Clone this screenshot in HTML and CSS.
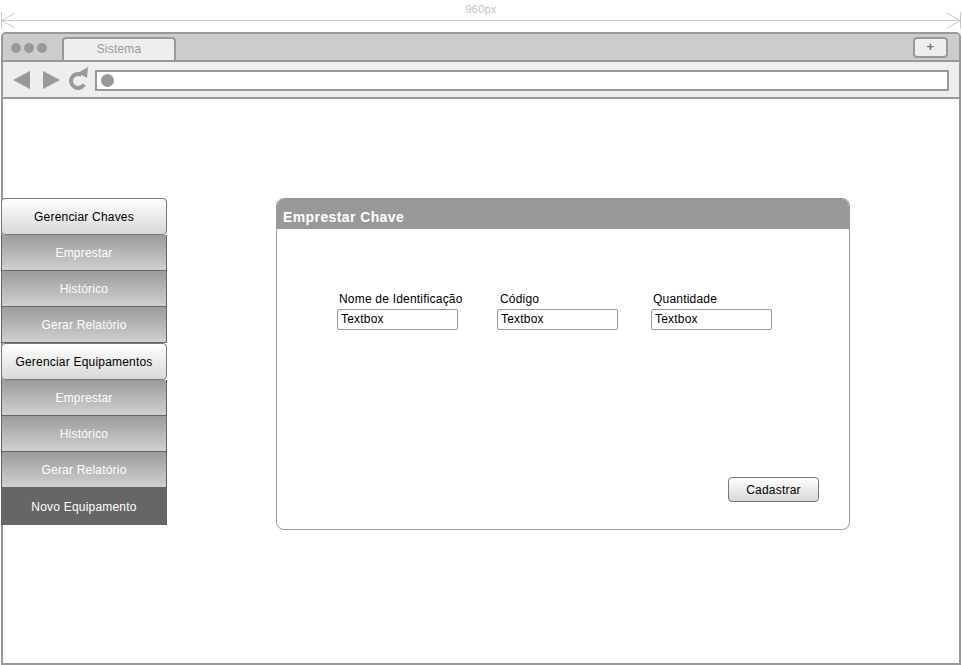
FILE: index.html
```html
<!DOCTYPE html>
<html lang="pt">
<head>
<meta charset="utf-8">
<title>Sistema</title>
<link rel="stylesheet" href="styles.css">
</head>
<body>
<div class="ruler">
  <svg class="ruler-line" width="962" height="32" viewBox="0 0 962 32">
    <line x1="1" y1="20.5" x2="961" y2="20.5" stroke="#c8c8c8" stroke-width="1"/>
    <line x1="1.5" y1="12" x2="1.5" y2="29" stroke="#c8c8c8" stroke-width="1"/>
    <line x1="1.5" y1="20.5" x2="15" y2="13" stroke="#c8c8c8" stroke-width="1"/>
    <line x1="1.5" y1="20.5" x2="15" y2="28" stroke="#c8c8c8" stroke-width="1"/>
    <line x1="960.5" y1="12" x2="960.5" y2="29" stroke="#c8c8c8" stroke-width="1"/>
    <line x1="960.5" y1="20.5" x2="947" y2="13" stroke="#c8c8c8" stroke-width="1"/>
    <line x1="960.5" y1="20.5" x2="947" y2="28" stroke="#c8c8c8" stroke-width="1"/>
  </svg>
  <span class="ruler-label">960px</span>
</div>
<div class="browser">
  <div class="titlebar">
    <div class="dots"><span></span><span></span><span></span></div>
    <div class="tab">Sistema</div>
    <div class="newtab">+</div>
  </div>
  <div class="toolbar">
    <svg class="nav-icons" width="90" height="35" viewBox="0 0 90 35">
      <polygon points="27,9 27,27 10,18" fill="#999"/>
      <polygon points="40,9 40,27 57,18" fill="#999"/>
      <path d="M81.1 22.5 A7 7 0 1 1 78.5 12.9" fill="none" stroke="#999" stroke-width="4"/>
      <polygon points="75,11 85,5 84,16" fill="#999"/>
    </svg>
    <div class="address"><span class="address-dot"></span></div>
  </div>
  <div class="content">
    <nav class="sidebar">
      <div class="menu-head">Gerenciar Chaves</div>
      <div class="menu-item">Emprestar</div>
      <div class="menu-item">Histórico</div>
      <div class="menu-item">Gerar Relatório</div>
      <div class="menu-head">Gerenciar Equipamentos</div>
      <div class="menu-item">Emprestar</div>
      <div class="menu-item">Histórico</div>
      <div class="menu-item">Gerar Relatório</div>
      <div class="menu-active">Novo Equipamento</div>
    </nav>
    <section class="panel">
      <div class="panel-header">Emprestar Chave</div>
      <div class="panel-body">
        <div class="fields">
          <div class="field">
            <label class="field-label">Nome de Identificação</label>
            <div class="textbox">Textbox</div>
          </div>
          <div class="field">
            <label class="field-label">Código</label>
            <div class="textbox">Textbox</div>
          </div>
          <div class="field">
            <label class="field-label">Quantidade</label>
            <div class="textbox">Textbox</div>
          </div>
        </div>
        <button class="btn" type="button">Cadastrar</button>
      </div>
    </section>
  </div>
</div>
</body>
</html>
```
FILE: styles.css
```css
* { box-sizing: border-box; }
html, body {
  margin: 0;
  padding: 0;
  background: #fff;
}
body {
  width: 962px;
  height: 665px;
  overflow: hidden;
  font-family: "Liberation Sans", Arial, sans-serif;
  font-size: 12px;
  letter-spacing: 0.2px;
  color: #000;
}

/* ruler */
.ruler {
  display: grid;
  height: 32px;
}
.ruler-line, .ruler-label { grid-area: 1 / 1; }
.ruler-line { display: block; }
.ruler-label {
  justify-self: center;
  margin-top: 3px;
  font-size: 11px;
  line-height: 13px;
  color: #c4c4c4;
}

/* browser frame */
.browser {
  margin-left: 1px;
  width: 960px;
  height: 633px;
  border: 2px solid #999;
  border-radius: 5px 5px 0 0;
  display: flex;
  flex-direction: column;
}
.titlebar {
  height: 28px;
  background: #ccc;
  border-bottom: 2px solid #999;
  display: flex;
  align-items: flex-start;
  padding-left: 8px;
  padding-right: 11px;
  border-radius: 3px 3px 0 0;
}
.dots {
  display: flex;
  gap: 3px;
  margin-top: 9px;
}
.dots span {
  width: 10px;
  height: 10px;
  border-radius: 50%;
  background: #999;
}
.tab {
  margin-left: 15px;
  margin-top: 3px;
  width: 114px;
  height: 23px;
  background: #eee;
  border: 2px solid #999;
  border-bottom: none;
  border-radius: 4px 4px 0 0;
  color: #999;
  font-size: 12px;
  line-height: 20px;
  text-align: center;
}
.newtab {
  margin-left: auto;
  margin-top: 3px;
  width: 35px;
  height: 21px;
  background: #eee;
  border: 2px solid #999;
  border-radius: 4px;
  color: #777;
  font-weight: bold;
  font-size: 13px;
  line-height: 16px;
  text-align: center;
}
.toolbar {
  height: 37px;
  background: #eee;
  border-bottom: 2px solid #999;
  display: flex;
  align-items: flex-start;
}
.nav-icons { display: block; flex: none; }
.address {
  margin-left: 2px;
  margin-top: 8px;
  width: 854px;
  height: 21px;
  background: #fff;
  border: 2px solid #999;
  display: flex;
  align-items: center;
  padding-left: 4px;
}
.address-dot {
  width: 13px;
  height: 13px;
  border-radius: 50%;
  background: #999;
}

/* content */
.content {
  flex: 1;
  display: flex;
  align-items: flex-start;
  padding-top: 99px;
}
.sidebar {
  margin-left: -2px;
  width: 166px;
  display: flex;
  flex-direction: column;
}
.menu-head, .menu-item, .menu-active {
  display: flex;
  align-items: center;
  justify-content: center;
  font-size: 12px;
}
.menu-head {
  height: 37px;
  background: linear-gradient(#ffffff, #d8d8d8);
  border: 1px solid #777;
  border-radius: 4px;
  color: #000;
}
.menu-item {
  height: 36px;
  background: linear-gradient(#9b9b9b, #d0d0d0);
  border-left: 1px solid #666;
  border-right: 1px solid #666;
  border-bottom: 1px solid #666;
  color: #fff;
}
.menu-active {
  height: 37px;
  background: #666;
  color: #fff;
}

.panel {
  margin-left: 109px;
  width: 574px;
  height: 332px;
  border: 1px solid #999;
  border-radius: 8px;
  display: flex;
  flex-direction: column;
  overflow: hidden;
}
.panel-header {
  height: 30px;
  background: #999;
  color: #fff;
  font-weight: bold;
  font-size: 14px;
  letter-spacing: 0.4px;
  line-height: 16px;
  padding: 10px 0 4px 6px;
}
.panel-body {
  flex: 1;
  display: flex;
  flex-direction: column;
  padding: 63px 0 0 60px;
}
.fields {
  display: grid;
  grid-template-columns: 160px 154px 121px;
}
.field {
  display: flex;
  flex-direction: column;
  width: 121px;
}
.field-label {
  margin-left: 2px;
  line-height: 14px;
  margin-bottom: 3px;
  white-space: nowrap;
}
.field:nth-child(2) .field-label { margin-left: 3px; }
.textbox {
  height: 21px;
  border: 1px solid #999;
  border-radius: 2px;
  padding-left: 3px;
  line-height: 19px;
  background: #fff;
}
.btn {
  margin-top: auto;
  align-self: flex-end;
  margin-right: 30px;
  margin-bottom: 27px;
  width: 91px;
  height: 25px;
  background: linear-gradient(#ffffff, #d8d8d8);
  border: 1px solid #777;
  border-radius: 4px;
  font-family: "Liberation Sans", Arial, sans-serif;
  font-size: 12px;
  letter-spacing: 0.2px;
  color: #000;
  padding: 0;
}
```
